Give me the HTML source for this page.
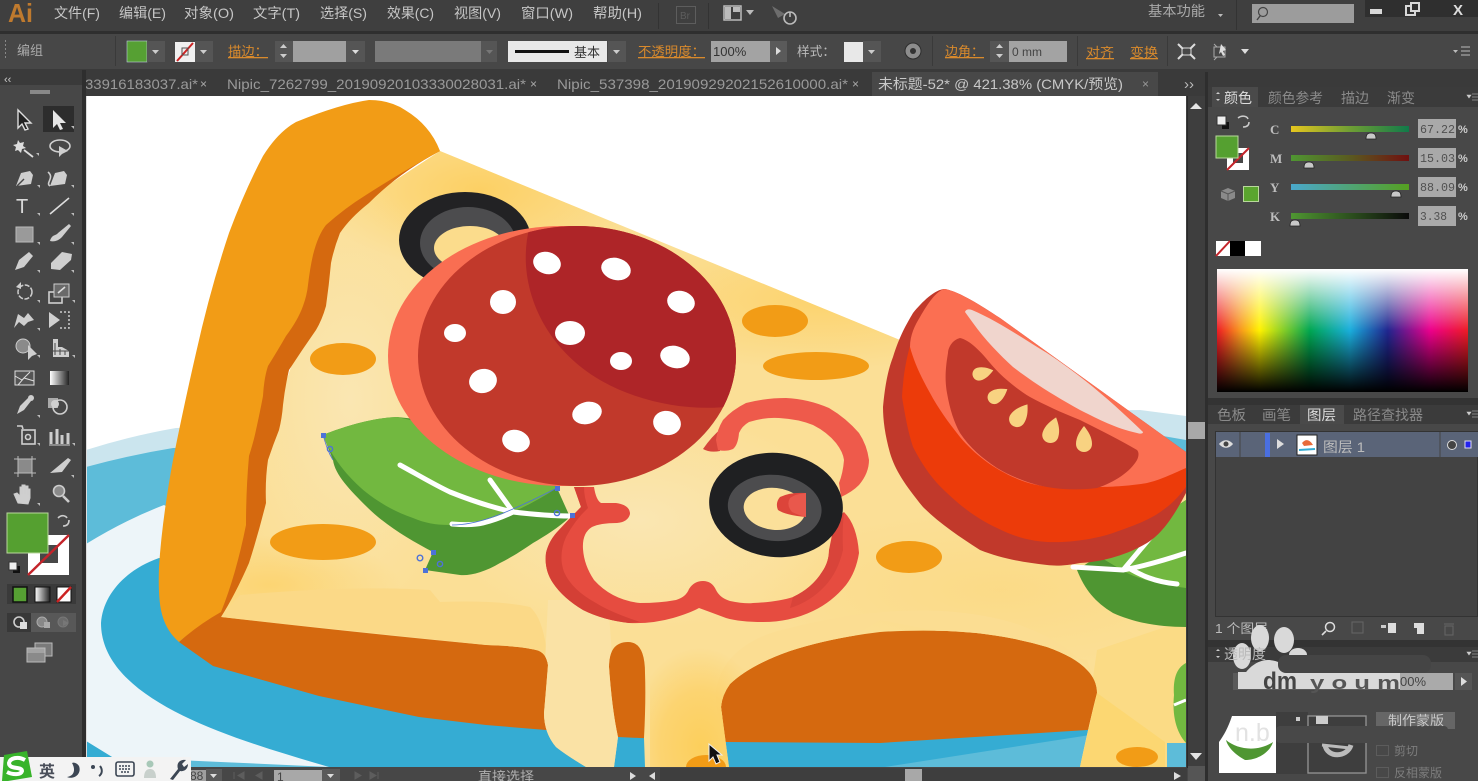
<!DOCTYPE html>
<html><head><meta charset="utf-8"><title>Illustrator</title>
<style>
html,body{margin:0;padding:0;background:#444;overflow:hidden;width:1478px;height:781px}
svg{display:block;overflow:hidden}
text{font-family:"Liberation Sans","Noto Sans CJK SC",sans-serif}
.m{font-size:14px;fill:#c6c6c6}
.o{font-size:13px;fill:#d98a2c;text-decoration:underline}
.t{font-size:14px;fill:#9a9a9a}
.p{font-size:14px;fill:#8a8a8a}
.k{font-family:"Liberation Serif",serif;font-weight:bold;font-size:13px;fill:#bdbdbd}
.f{font-family:"Liberation Mono",monospace;font-size:12px;fill:#505050}
.i{fill:#cfcfcf}.s{fill:none;stroke:#cfcfcf;stroke-width:1.6}
</style></head><body>
<svg width="1478" height="781" viewBox="0 0 1478 781" xmlns="http://www.w3.org/2000/svg">
<defs>
<linearGradient id="hue"><stop offset="0" stop-color="#ed1c24"/><stop offset=".09" stop-color="#f7941d"/><stop offset=".17" stop-color="#fff200"/><stop offset=".37" stop-color="#00a651"/><stop offset=".53" stop-color="#1aaedc"/><stop offset=".68" stop-color="#20268f"/><stop offset=".85" stop-color="#ec008c"/><stop offset="1" stop-color="#ed1c24"/></linearGradient>
<linearGradient id="wb" x1="0" y1="0" x2="0" y2="1"><stop offset="0" stop-color="#fff"/><stop offset=".5" stop-color="#fff" stop-opacity="0"/><stop offset=".5" stop-color="#000" stop-opacity="0"/><stop offset="1" stop-color="#000"/></linearGradient>
<linearGradient id="sc" ><stop offset="0" stop-color="#e6c61e"/><stop offset=".5" stop-color="#6f9e34"/><stop offset="1" stop-color="#117a4a"/></linearGradient>
<linearGradient id="sm"><stop offset="0" stop-color="#4f9632"/><stop offset=".5" stop-color="#5a5a20"/><stop offset="1" stop-color="#701010"/></linearGradient>
<linearGradient id="sy"><stop offset="0" stop-color="#4aa8cc"/><stop offset="1" stop-color="#55a020"/></linearGradient>
<linearGradient id="sk"><stop offset="0" stop-color="#4f9632"/><stop offset="1" stop-color="#0a0a0a"/></linearGradient>
<linearGradient id="gr"><stop offset="0" stop-color="#fff"/><stop offset="1" stop-color="#222"/></linearGradient>
<radialGradient id="ch1" cx=".5" cy=".5" r=".5"><stop offset="0" stop-color="#fae6b2"/><stop offset="1" stop-color="#fae6b2" stop-opacity="0"/></radialGradient>
<radialGradient id="ch2" cx=".5" cy=".5" r=".5"><stop offset="0" stop-color="#fcd064"/><stop offset="1" stop-color="#fcd064" stop-opacity="0"/></radialGradient>
<radialGradient id="ch3" cx=".5" cy=".85" r=".72"><stop offset="0" stop-color="#fccf5c"/><stop offset=".55" stop-color="#fcd064" stop-opacity=".75"/><stop offset="1" stop-color="#fcd064" stop-opacity="0"/></radialGradient>
<clipPath id="canvas"><rect x="86" y="96" width="1100" height="671"/></clipPath>
<clipPath id="pin"><ellipse cx="577" cy="356" rx="159" ry="130"/></clipPath>
<clipPath id="chz"><path d="M440 151L900 340 1186 460V743H1167V767H1080Q1090 720 1097 693 1097 680 1087 670 1075 657 1047 647 1000 633 947 631 910 630 880 632 830 638 790 651 750 665 730 684 722 695 721 707L729 767H645L644 738Q646 700 645 673 645 642 628 642 609 642 609 667 612 710 618 737L614 767H586Q566 755 556 747 544 733 544 713 546 690 548 665 546 652 536 650 520 646 486 645 350 632 221 617L250 520 280 400 320 280 350 210Z"/></clipPath>
<path id="seed" d="M0-13C4-8 8-2 8 5 8 10 4 13 0 13-4 13-8 10-8 5-8-2-4-8 0-13Z"/>
</defs>

<!-- base chrome -->
<rect width="1478" height="781" fill="#474747"/>
<rect width="1478" height="31" fill="#3f3f3f"/>
<rect y="31" width="1478" height="3" fill="#2f2f2f"/>
<rect y="34" width="1478" height="35" fill="#474747"/>
<rect y="69" width="1478" height="27" fill="#3a3a3a"/>

<!-- artwork -->
<g clip-path="url(#canvas)">
<rect x="86" y="96" width="1100" height="671" fill="#fff"/>
<!-- plate -->
<path d="M86 450Q130 436 176 428L500 420 1140 410 1186 416V767H86Z" fill="#cbe5ee"/>
<path d="M86 467Q130 455 173 448L1100 425 1186 440V767H86Z" fill="#5dbcd9"/>
<path d="M86 544Q125 520 164 505L400 640 1186 700V767H330L112 757 86 741Z" fill="#edf5f9"/>
<path d="M86 741L112 757H86Z" fill="#35acd3"/>
<path d="M101 623C103 595 125 570 159 558L400 600 1186 700V767H329C230 738 101 700 101 623Z" fill="#35acd3"/>
<path d="M885 767L1090 735V767Z" fill="#5dbcd9"/>
<rect x="1165" y="742" width="22" height="25" fill="#5dbcd9"/>
<!-- orange base -->
<path d="M179 642L221 605 1186 600V720L1087 730 880 743 726 742 618 737 546 730 486 725 419 717 319 696 213 666Z" fill="#d5690f"/>
<!-- cheese -->
<g clip-path="url(#chz)">
<rect x="200" y="140" width="990" height="630" fill="#fbdf96"/>
<ellipse cx="480" cy="190" rx="170" ry="80" fill="url(#ch2)"/>
<ellipse cx="350" cy="400" rx="120" ry="220" fill="url(#ch1)"/>
<ellipse cx="270" cy="585" rx="130" ry="50" fill="url(#ch2)" opacity=".7"/>
<ellipse cx="640" cy="520" rx="200" ry="110" fill="url(#ch1)"/>
<ellipse cx="820" cy="300" rx="220" ry="70" fill="url(#ch2)" opacity=".8"/>
<ellipse cx="1000" cy="590" rx="240" ry="80" fill="url(#ch2)" opacity=".3"/>
<path d="M221 617L240 595Q350 585 430 590L440 602Q500 600 530 607 545 620 548 665L536 650 486 645Z" fill="#fbd987"/>
<path d="M548 600H608L620 767H540Z" fill="#fae2a5"/>
<path d="M720 720C705 680 730 640 790 628 880 605 960 605 1020 625 1060 640 1090 660 1097 690L1087 660 880 620Z" fill="#fbdd92"/>
<rect x="650" y="630" width="100" height="137" fill="url(#ch3)"/>
<path d="M1097 650L1186 620V767H1080Z" fill="#fbdb85"/>
<path d="M1097 693L1165 742V767H1080Z" fill="#fcd772"/>
<ellipse cx="1137" cy="757" rx="21" ry="10" fill="#f29c16"/>
<ellipse cx="706" cy="767" rx="20" ry="12" fill="#f29c16"/>
</g>
<!-- dark crust band -->
<path d="M440 151Q400 172 369 203 350 218 340 233 334 248 331 263 329 285 326 306 322 320 316 330 302 350 289 370 285 387 283 405 282 418 279 430 273 445 268 460 265 480 266 503 258 535 249 563 235 595 221 617L180 640 200 400 300 150Z" fill="#d5690f"/>
<!-- crust -->
<path d="M440 151Q430 125 405 110 390 100 369 100 340 104 296 122 278 132 263 156 245 190 229 233 210 290 196 353 184 405 173 460 162 520 159 567 158 595 161 610 165 630 179 642 198 625 221 612 236 575 246 525 246 490 249 456 254 440 256 430 260 412 263 396 264 378 268 366 278 350 286 336 298 320 303 306 307 295 308 285 310 268 313 255 318 235 326 225 345 208 366 195 405 170 440 151Z" fill="#f29c16"/>
<!-- orange blobs -->
<g fill="#f29c16"><ellipse cx="343" cy="359" rx="33" ry="16"/><ellipse cx="775" cy="321" rx="33" ry="16"/><ellipse cx="816" cy="366" rx="53" ry="14"/><ellipse cx="323" cy="542" rx="53" ry="18"/><ellipse cx="909" cy="557" rx="33" ry="16"/></g>
<!-- olive 1 -->
<ellipse cx="465" cy="240" rx="66" ry="48" fill="#222224"/>
<ellipse cx="468" cy="243" rx="48" ry="36" fill="#4c4c4e"/>
<ellipse cx="470" cy="248" rx="36" ry="22" fill="#fbdc8c"/>
<!-- left leaf -->
<path d="M323 435C340 428 370 418 397 417L520 430 557 488 570 517C558 528 545 536 533 543 520 552 510 558 500 563 485 572 470 576 460 575L425 570 433 552C410 540 385 525 367 507 350 490 335 475 333 460Z" fill="#4f9632"/>
<path d="M323 435C340 428 370 418 397 417L500 440 557 488C538 500 520 510 500 517 485 523 468 525 450 525 435 525 425 523 413 518 395 512 380 503 367 493 348 478 330 455 323 435Z" fill="#72b840"/>
<path d="M400 465C420 476 435 485 450 492 470 500 490 507 513 512 530 514 550 516 570 516M452 524C465 525 475 525 483 523 495 520 505 516 513 512M490 480L513 512" fill="none" stroke="#fff" stroke-width="5" stroke-linecap="round"/>
<!-- pepper -->
<path d="M594 487Q596 500 601 503L616 503Q630 505 630 514 628 522 617 523 600 523 592 527 582 533 583 549 584 565 594 580 612 600 640 603 660 603 676 600 686 597 689 589 694 581 703 581 712 581 716 590 720 598 730 601 745 604 753 603 778 602 793 597 812 588 822 572 829 562 829 550L844 512Q857 525 859 553 856 572 846 585 832 602 813 611 790 622 763 622 740 622 726 618 710 612 699 608 690 613 673 618 652 624 629 623 603 620 583 610 563 598 553 583 544 570 546 553 549 540 559 530 570 518 581 507L574 487Z" fill="#e64c40"/>
<path d="M574 487L581 507Q570 518 559 530 549 540 546 553 544 570 553 583 563 598 583 610 603 620 629 623L640 622Q610 612 596 603 572 590 564 572 558 555 566 537 575 520 588 508 584 497 584 487Z" fill="#d43f35"/>
<path d="M844 512Q842 530 843 550 838 572 825 586 810 602 790 608L793 597Q812 588 822 572 829 562 829 550L835 520Z" fill="#d9443a"/>
<path d="M703 449Q712 436 722 428L720 451Q710 453 703 449Z" fill="#d5443a"/>
<path d="M841 497Q852 492 859 485 869 473 869 460 867 445 859 433 846 418 829 408 808 399 786 398 765 398 746 403 732 410 723 420 717 430 716 440L718 450Q726 452 733 449 738 445 739 433 742 426 749 422 765 417 779 418 798 419 813 425 827 432 836 443 843 452 844 460 843 473 839 483Z" fill="#ee5a4b"/>
<!-- pepperoni -->
<ellipse cx="562" cy="356" rx="174" ry="130" fill="#f96e52"/>
<ellipse cx="577" cy="356" rx="159" ry="130" fill="#c1392b"/>
<path d="M530 225C515 280 540 345 600 380 640 403 690 412 735 406L780 200Z" fill="#ae2528" clip-path="url(#pin)"/>
<g fill="#fff">
<ellipse cx="547" cy="263" rx="14" ry="11" transform="rotate(15 547 263)"/><ellipse cx="616" cy="269" rx="15" ry="11" transform="rotate(15 616 269)"/><ellipse cx="681" cy="302" rx="14" ry="11" transform="rotate(15 681 302)"/><ellipse cx="503" cy="302" rx="13" ry="12"/><ellipse cx="455" cy="333" rx="11" ry="9"/><ellipse cx="570" cy="333" rx="15" ry="12"/><ellipse cx="621" cy="361" rx="11" ry="9"/><ellipse cx="675" cy="357" rx="15" ry="11" transform="rotate(15 675 357)"/><ellipse cx="483" cy="381" rx="14" ry="12" transform="rotate(-15 483 381)"/><ellipse cx="587" cy="413" rx="15" ry="11" transform="rotate(-15 587 413)"/><ellipse cx="667" cy="423" rx="14" ry="12" transform="rotate(15 667 423)"/><ellipse cx="516" cy="441" rx="14" ry="11" transform="rotate(15 516 441)"/>
</g>
<!-- leaf notch anchors -->
<g fill="#4d72d8"><rect x="321" y="433" width="5" height="5"/><rect x="431" y="550" width="5" height="5"/><rect x="423" y="568" width="5" height="5"/><rect x="555" y="486" width="5" height="5"/><rect x="570" y="513" width="5" height="5"/></g>
<g fill="none" stroke="#4d72d8" stroke-width="1.4"><circle cx="330" cy="449" r="2.6"/><circle cx="420" cy="558" r="2.8"/><circle cx="440" cy="564" r="2.6"/><circle cx="557" cy="513" r="2.6"/></g>
<path d="M323 435C326 445 328 452 333 460M452 525C475 525 500 517 557 488" fill="none" stroke="#4d72d8" stroke-width=".8"/>
<!-- olive 2 -->
<g transform="rotate(6 776 505)"><ellipse cx="776" cy="505" rx="67" ry="52" fill="#1f2022"/><ellipse cx="775" cy="508" rx="47" ry="33" fill="#4c4c4e"/><ellipse cx="775" cy="509" rx="31" ry="21" fill="#fbe09a"/></g>
<path d="M806 493Q790 492 780 497 775 503 778 510 785 515 806 517Z" fill="#dc443a"/>
<path d="M806 493Q795 494 790 498 786 505 792 512 798 515 806 517Z" fill="#e9584c"/>
<!-- right leaf -->
<path d="M1077 570C1085 590 1095 602 1113 613 1135 623 1160 627 1186 627V500L1100 555Z" fill="#4f9632"/>
<path d="M1100 557L1186 500V588C1165 585 1140 580 1125 572Z" fill="#72b840"/>
<path d="M1073 567L1123 570C1145 566 1165 560 1186 553M1124 569L1155 532M1127 567C1140 575 1155 582 1177 584" fill="none" stroke="#fff" stroke-width="5" stroke-linecap="round"/>
<path d="M1186 663C1176 668 1173 680 1174 695 1172 715 1176 732 1186 743Z" fill="#72b840"/>
<path d="M1174 705L1186 700" stroke="#fff" stroke-width="3"/>
<!-- tomato -->
<path d="M945 289C960 292 980 305 1000 318L1186 452V493C1172 520 1160 535 1147 543 1125 556 1100 562 1080 563 1065 566 1055 566 1047 565 1020 562 1000 558 980 550 960 537 940 524 923 507 905 485 895 470 890 453 885 435 883 420 883 407 885 385 888 370 893 357 900 335 906 325 913 313 922 302 935 289 945 289Z" fill="#c1392b"/>
<path d="M902 397C905 415 908 432 913 447 925 470 935 482 947 493 965 510 980 520 997 528 1015 537 1030 541 1047 542 1070 543 1095 539 1113 533 1135 525 1150 520 1163 510 1172 504 1180 495 1186 487V452L945 289C925 300 905 340 902 397Z" fill="#ec3b0a"/>
<path d="M945 289C960 292 980 305 1000 318L1186 452V468C1170 475 1160 480 1147 483 1130 486 1110 487 1097 487 1070 490 1040 488 1020 480 995 470 975 455 960 437 948 422 938 408 930 393 921 377 914 362 910 347 910 335 915 325 920 317 928 303 937 290 945 289Z" fill="#fb6f52"/>
<path d="M960 338C952 340 948 348 948 353 945 370 945 382 947 393 950 410 954 422 960 433 970 448 982 458 997 468 1012 477 1030 484 1047 487 1065 490 1082 490 1097 488 1115 482 1130 472 1137 460 1139 456 1139 452 1137 450 1120 440 1100 430 1080 420 1060 412 1045 405 1030 397 1015 388 1000 375 990 363 982 353 970 340 960 338Z" fill="#c1392b"/>
<path d="M965 312C966 309 969 309 972 310 1000 322 1025 340 1047 353 1085 378 1115 405 1143 432 1143 434 1140 434 1137 433 1115 428 1100 420 1080 410 1055 396 1035 384 1013 367 1000 355 985 340 973 323Z" fill="#f0d5cd"/>
<g fill="#f8d281">
<use href="#seed" transform="translate(983 373) rotate(75) scale(.82)"/>
<use href="#seed" transform="translate(998 395) rotate(58) scale(.85)"/>
<use href="#seed" transform="translate(1020 415) rotate(35)"/>
<use href="#seed" transform="translate(1052 430) rotate(18) scale(1.02)"/>
<use href="#seed" transform="translate(1084 439)"/>
</g>
<!-- cursor -->
<path d="M709 744V761L713 757 716 764 720 762 717 755H722Z" fill="#111" stroke="#eee" stroke-width="1"/>
</g>
<rect x="86" y="96" width="1" height="671" fill="#ddd"/>

<!-- menu bar -->
<text x="8" y="22" font-size="26" font-weight="bold" fill="#bf7a2e" textLength="25" lengthAdjust="spacingAndGlyphs">Ai</text>
<text class="m" x="54" y="18" textLength="46" lengthAdjust="spacingAndGlyphs">文件(F)</text>
<text class="m" x="119" y="18" textLength="47" lengthAdjust="spacingAndGlyphs">编辑(E)</text>
<text class="m" x="184" y="18" textLength="50" lengthAdjust="spacingAndGlyphs">对象(O)</text>
<text class="m" x="253" y="18" textLength="47" lengthAdjust="spacingAndGlyphs">文字(T)</text>
<text class="m" x="320" y="18" textLength="47" lengthAdjust="spacingAndGlyphs">选择(S)</text>
<text class="m" x="387" y="18" textLength="47" lengthAdjust="spacingAndGlyphs">效果(C)</text>
<text class="m" x="454" y="18" textLength="47" lengthAdjust="spacingAndGlyphs">视图(V)</text>
<text class="m" x="521" y="18" textLength="52" lengthAdjust="spacingAndGlyphs">窗口(W)</text>
<text class="m" x="593" y="18" textLength="49" lengthAdjust="spacingAndGlyphs">帮助(H)</text>
<rect x="658" y="3" width="1" height="26" fill="#333"/>
<rect x="676.500" y="6.500" width="19" height="17" fill="none" stroke="#5d5d5d"/><text x="680" y="19" font-size="10" fill="#5d5d5d">Br</text>
<rect x="708" y="3" width="1" height="26" fill="#333"/>
<rect x="724" y="6" width="17" height="14" fill="none" stroke="#bbb" stroke-width="1.5"/><rect x="725" y="7" width="6" height="12" fill="#bbb"/><rect x="733" y="7" width="7" height="5" fill="#bbb"/>
<path d="M746 10h8l-4 5z" fill="#bbb"/>
<path d="M772 6L785 14 778 18Z" fill="#6d6d6d"/><circle cx="790" cy="18" r="6" fill="none" stroke="#bbb" stroke-width="1.6"/><path d="M790 12v5" stroke="#bbb" stroke-width="1.6"/>
<text class="m" x="1148" y="16" textLength="57" lengthAdjust="spacingAndGlyphs" style="fill:#aaa">基本功能</text>
<path d="M1218 14h5l-2.500 3z" fill="#bbb"/>
<rect x="1236" y="0" width="1" height="30" fill="#333"/>
<rect x="1252" y="4" width="102" height="19" fill="#9c9c9c"/>
<circle cx="1263" cy="12" r="4.500" fill="none" stroke="#444" stroke-width="1.2"/><path d="M1260 16l-3 4" stroke="#444" stroke-width="1.4"/>
<rect x="1365" y="0" width="113" height="17" fill="#2f2f2f"/>
<rect x="1370" y="9" width="12" height="5" fill="#d8d8d8"/>
<rect x="1406" y="6" width="9" height="9" fill="none" stroke="#d8d8d8" stroke-width="2"/><rect x="1411" y="3" width="8" height="8" fill="#2f2f2f" stroke="#d8d8d8" stroke-width="2"/>
<text x="1453" y="15" font-size="15" fill="#ddd" font-weight="bold">X</text>

<!-- control bar -->
<g fill="#888"><rect x="5" y="40" width="1" height="2"/><rect x="5" y="44" width="1" height="2"/><rect x="5" y="48" width="1" height="2"/><rect x="5" y="52" width="1" height="2"/><rect x="5" y="56" width="1" height="2"/></g>
<text class="m" x="17" y="55" font-size="13" style="font-size:13px;fill:#aaa">编组</text>
<rect x="115" y="36" width="1" height="30" fill="#3a3a3a"/>
<rect x="127" y="41" width="20" height="21" fill="#56a033" stroke="#bcd" stroke-width=".6"/>
<rect x="147" y="41" width="18" height="21" fill="#555"/><path d="M152 50h7l-3.500 4z" fill="#ccc"/>
<rect x="175" y="42" width="20" height="20" fill="#f0f0f0"/><path d="M177 61L193 43" stroke="#c22" stroke-width="2"/><rect x="182" y="48" width="6" height="7" fill="none" stroke="#555"/>
<rect x="195" y="41" width="18" height="21" fill="#555"/><path d="M200 50h7l-3.500 4z" fill="#ccc"/>
<text class="o" x="228" y="56" textLength="40" lengthAdjust="spacingAndGlyphs">描边：</text>
<rect x="275" y="41" width="18" height="21" fill="#555"/><path d="M280 48h7l-3.500-4zM280 54h7l-3.500 4z" fill="#ccc"/>
<rect x="293" y="41" width="53" height="21" fill="#a0a0a0"/>
<rect x="346" y="41" width="19" height="21" fill="#555"/><path d="M352 50h7l-3.500 4z" fill="#ddd"/>
<rect x="375" y="41" width="106" height="21" fill="#7a7a7a"/><rect x="481" y="41" width="16" height="21" fill="#555"/><path d="M486 50h7l-3.500 4z" fill="#777"/>
<rect x="508" y="41" width="99" height="21" fill="#e8e8e8"/><rect x="515" y="50" width="54" height="3" fill="#111"/>
<text x="574" y="57" font-size="13" fill="#333">基本</text>
<rect x="608" y="41" width="18" height="21" fill="#555"/><path d="M613 50h7l-3.500 4z" fill="#ccc"/>
<text class="o" x="638" y="56" textLength="67" lengthAdjust="spacingAndGlyphs">不透明度：</text>
<rect x="711" y="41" width="59" height="21" fill="#a3a3a3"/><text x="713" y="56" font-size="13" fill="#333" font-family="Liberation Mono">100%</text>
<rect x="770" y="41" width="17" height="21" fill="#5a5a5a"/><path d="M776 47v8l5-4z" fill="#ddd"/>
<text class="m" x="797" y="56" style="font-size:13px;fill:#bbb" textLength="38" lengthAdjust="spacingAndGlyphs">样式：</text>
<rect x="844" y="42" width="19" height="20" fill="#e8e8e8"/>
<rect x="863" y="41" width="18" height="21" fill="#555"/><path d="M868 50h7l-3.500 4z" fill="#ccc"/>
<circle cx="913" cy="51" r="8" fill="#8d8d8d" stroke="#2e2e2e"/><circle cx="913" cy="51" r="3" fill="#333"/>
<rect x="932" y="36" width="1" height="30" fill="#3a3a3a"/>
<text class="o" x="945" y="56" textLength="39" lengthAdjust="spacingAndGlyphs">边角：</text>
<rect x="990" y="41" width="19" height="21" fill="#555"/><path d="M996 48h7l-3.500-4zM996 54h7l-3.500 4z" fill="#ccc"/>
<rect x="1009" y="41" width="58" height="21" fill="#a3a3a3"/><text x="1012" y="56" font-size="12" fill="#444" font-family="Liberation Mono">0 mm</text>
<rect x="1077" y="36" width="1" height="30" fill="#3a3a3a"/>
<text class="o" x="1086" y="57" textLength="28" lengthAdjust="spacingAndGlyphs">对齐</text>
<text class="o" x="1130" y="57" textLength="28" lengthAdjust="spacingAndGlyphs">变换</text>
<rect x="1167" y="36" width="1" height="30" fill="#3a3a3a"/>
<path d="M1178 44l5 5M1195 44l-5 5M1178 59l5-5M1195 59l-5-5" stroke="#ddd" stroke-width="2"/><rect x="1182" y="48" width="9" height="7" fill="none" stroke="#ddd"/>
<rect x="1214" y="47" width="11" height="10" fill="none" stroke="#aaa"/><path d="M1221 44l5 6-3 1 2 4-2 1-2-4-2 2Z" fill="#ddd"/><path d="M1214 44l3 3M1214 60l3-3" stroke="#aaa"/>
<path d="M1241 49h8l-4 5z" fill="#ddd"/>
<path d="M1461 47h9M1461 51h9M1461 55h9" stroke="#bbb"/><path d="M1453 50h5l-2.500 3z" fill="#bbb"/>

<!-- tabs -->
<rect x="0" y="70" width="82" height="15" fill="#3a3a3a"/>
<text x="4" y="83" font-size="11" fill="#ccc">‹‹</text>
<rect x="872" y="72" width="286" height="24" fill="#484848"/>
<text class="t" x="85" y="89" textLength="113" lengthAdjust="spacingAndGlyphs">33916183037.ai*</text><text x="200" y="88" font-size="12" fill="#aaa">×</text>
<text class="t" x="227" y="89" textLength="299" lengthAdjust="spacingAndGlyphs">Nipic_7262799_20190920103330028031.ai*</text><text x="530" y="88" font-size="12" fill="#aaa">×</text>
<text class="t" x="557" y="89" textLength="291" lengthAdjust="spacingAndGlyphs">Nipic_537398_20190929202152610000.ai*</text><text x="852" y="88" font-size="12" fill="#aaa">×</text>
<text class="t" x="878" y="89" textLength="245" lengthAdjust="spacingAndGlyphs" style="fill:#c8c8c8">未标题-52* @ 421.38% (CMYK/预览)</text><text x="1142" y="88" font-size="12" fill="#999">×</text>
<text x="1184" y="89" font-size="15" fill="#bbb">››</text>

<!-- left toolbar -->
<rect x="0" y="85" width="82" height="683" fill="#474747"/>
<rect x="82" y="70" width="4" height="698" fill="#2e2e2e"/>
<rect x="30" y="90" width="20" height="4" fill="#888"/>
<rect x="43" y="106" width="31" height="26" fill="#2d2d2d"/>
<g>
<!-- row1 -->
<path d="M18 110V128L22 124 25 130 28 129 25 123 31 123Z" fill="#222" stroke="#ddd" stroke-width="1.4"/>
<path d="M53 110V128L57 124 60 130 63 129 60 123 66 123Z" fill="#e6e6e6"/>
<!-- wand -->
<path d="M18 140l2 3 4-1-1 4 3 2-4 1-1 4-3-3-3 1 1-4-3-2 4-1Z" fill="#ddd"/><path d="M24 150L33 157" stroke="#ddd" stroke-width="1.8"/>
<ellipse cx="60" cy="146" rx="10" ry="6" class="s"/><path d="M59 146V157L62 154 68 151Z" class="i"/>
<!-- pen -->
<path d="M16 186L21 173 30 171 33 175 31 184Z" class="i"/><path d="M17 186L24 179" stroke="#474747" stroke-width="1.4"/>
<path d="M50 186L55 173 64 171 67 175 65 184 Z" class="i"/><path d="M48 172C55 178 45 183 50 186" class="s"/>
<!-- T line -->
<text x="16" y="213" font-family="Liberation Serif" font-size="20" fill="#d8d8d8">T</text>
<path d="M50 214L69 198" stroke="#ddd" stroke-width="1.6"/>
<!-- rect brush -->
<rect x="16" y="227" width="17" height="15" fill="#9a9a9a" stroke="#bbb"/>
<path d="M50 241C52 234 56 236 58 233L69 224 71 226 62 237C58 241 54 242 50 241Z" class="i"/>
<!-- pencil eraser -->
<path d="M15 270L19 260 29 252 33 256 24 267Z" class="i"/>
<path d="M51 263L62 252 72 254 71 260 60 270 51 269Z" class="i"/>
<!-- rotate scale -->
<circle cx="25" cy="292" r="7" fill="none" stroke="#ccc" stroke-width="1.5" stroke-dasharray="5 1.500"/><path d="M16 287l5-5v7z" class="i"/>
<rect x="49" y="292" width="13" height="11" class="s"/><rect x="54" y="284" width="15" height="13" fill="#6a6a6a" stroke="#ccc"/><path d="M58 293l7-6" stroke="#ddd" stroke-width="1.6"/>
<!-- warp free transform -->
<path d="M14 328L18 314 24 318 28 313 34 320 28 322 24 326 19 322Z" class="i"/>
<path d="M49 312V328L60 320Z" class="i"/><path d="M60 312H69V328H60" fill="none" stroke="#ccc" stroke-dasharray="2 2" stroke-width="1.5"/>
<!-- shape builder / perspective -->
<circle cx="23" cy="346" r="7" fill="#8a8a8a" stroke="#ccc"/><path d="M28 345V360L32 356 37 354Z" class="i"/>
<path d="M49 339H53V357H69V351L62 347H58V339Z" class="i"/><path d="M55 343V355M60 349V355M65 351V355M53 351H69" stroke="#474747"/>
<!-- mesh gradient -->
<rect x="15" y="371" width="19" height="14" fill="#555" stroke="#ddd"/><path d="M15 376L22 380 30 372M18 385L24 378 34 381" stroke="#ddd" fill="none"/>
<rect x="50" y="371" width="19" height="14" fill="url(#gr)"/>
<!-- eyedropper blend -->
<path d="M17 414L20 406 28 398 31 401 24 410Z" class="i"/><circle cx="31" cy="398" r="3" class="i"/>
<rect x="48" y="398" width="10" height="10" fill="#aaa"/><circle cx="60" cy="407" r="7" class="s"/><circle cx="55" cy="404" r="4" class="i"/>
<!-- symbol / chart -->
<rect x="22" y="430" width="13" height="14" class="s"/><circle cx="28" cy="437" r="2.500" class="s"/><path d="M17 426h5l1 3" class="s"/>
<path d="M51 444V432M57 444V429M62 444V435M68 444V433" stroke="#ccc" stroke-width="3"/><path d="M49 445H70" stroke="#ccc"/>
<!-- artboard / slice -->
<rect x="18" y="459" width="14" height="14" fill="#8a8a8a"/><path d="M14 459H36M14 473H36M18 456V477M32 456V477" stroke="#bbb"/>
<path d="M50 473L68 458 71 460 62 472Z" class="i"/>
<!-- hand zoom -->
<path d="M18 503L14 494 17 493 20 496V487H22V494 485H25V494 486H28V495 489H30V498L28 504Z" class="i" stroke="#ccc"/>
<circle cx="59" cy="491" r="5.500" fill="#8a8a8a" stroke="#ccc" stroke-width="1.6"/><path d="M63 496L69 502" stroke="#ccc" stroke-width="2.6"/>
</g>
<!-- tiny corner triangles -->
<g fill="#bbb">
<path d="M74 129v-3h-3z"/><path d="M39 156v-3h-3z"/><path d="M40 188v-3h-3z"/><path d="M74 188v-3h-3z"/><path d="M40 216v-3h-3z"/><path d="M74 216v-3h-3z"/><path d="M40 245v-3h-3z"/><path d="M74 245v-3h-3z"/><path d="M40 273v-3h-3z"/><path d="M74 273v-3h-3z"/><path d="M40 303v-3h-3z"/><path d="M75 303v-3h-3z"/><path d="M40 331v-3h-3z"/><path d="M40 358v-3h-3z"/><path d="M75 358v-3h-3z"/><path d="M40 418v-3h-3z"/><path d="M40 446v-3h-3z"/><path d="M75 446v-3h-3z"/><path d="M74 478v-3h-3z"/><path d="M40 506v-3h-3z"/>
</g>
<!-- fill/stroke -->
<rect x="28" y="535" width="41" height="40" fill="#fff"/><rect x="40" y="545" width="18" height="18" fill="#474747"/>
<path d="M28 575L69 535" stroke="#c4242a" stroke-width="2.4"/>
<rect x="7" y="513" width="41" height="40" fill="#55a030" stroke="#b9d79c"/>
<path d="M58 518C62 514 66 516 67 518M69 520C69 525 66 526 63 526" fill="none" stroke="#ccc" stroke-width="1.6"/>
<rect x="13" y="566" width="7" height="7" fill="#111"/><rect x="9" y="562" width="8" height="8" fill="#eee" stroke="#333"/>
<rect x="7" y="584" width="69" height="20" fill="#3a3a3a"/>
<rect x="13" y="587" width="14" height="15" fill="#56a033" stroke="#111" stroke-width="1.5"/>
<rect x="35" y="587" width="15" height="15" fill="url(#gr)" stroke="#111" stroke-width="1"/>
<rect x="57" y="587" width="14" height="15" fill="#fff" stroke="#111"/><path d="M57 602L71 587" stroke="#c22" stroke-width="2.4"/>
<rect x="7" y="613" width="24" height="19" fill="#383838"/><rect x="31" y="613" width="45" height="19" fill="#585858"/>
<circle cx="19" cy="622" r="5" class="s"/><rect x="20" y="622" width="7" height="7" fill="#ddd"/>
<circle cx="42" cy="622" r="5" fill="#888" stroke="#aaa"/><rect x="44" y="622" width="6" height="6" fill="#aaa"/>
<circle cx="63" cy="622" r="5" fill="#6b6b6b" stroke="#777"/><path d="M63 620l6 3-6 3z" fill="#777"/>
<rect x="35" y="643" width="17" height="13" fill="#7a7a7a" stroke="#bbb"/><rect x="27" y="648" width="18" height="14" fill="#8a8a8a" stroke="#bbb"/><rect x="27" y="648" width="18" height="5" fill="#bbb" opacity=".5"/>

<!-- vertical scrollbar -->
<rect x="1186" y="96" width="22" height="672" fill="#3e3e3e"/>
<rect x="1187" y="96" width="1" height="672" fill="#2a2a2a"/><rect x="1205" y="72" width="3" height="709" fill="#2e2e2e"/>
<path d="M1196 103l-6 6h12z" fill="#e5e5e5"/>
<rect x="1188" y="422" width="17" height="17" fill="#a8a8a8"/>
<path d="M1190 753h12l-6 7z" fill="#e5e5e5"/>
<rect x="1188" y="766" width="17" height="15" fill="#555"/>

<!-- right panels -->
<rect x="1208" y="72" width="270" height="15" fill="#3a3a3a"/>
<rect x="1208" y="87" width="270" height="20" fill="#3b3b3b"/>
<rect x="1212" y="87" width="46" height="20" fill="#4a4a4a"/>
<rect x="1208" y="107" width="270" height="291" fill="#484848"/>
<path d="M1216 94l2-2 2 2zM1216 99l2 2 2-2z" fill="#ccc"/>
<text x="1224" y="103" font-size="14" fill="#ddd">颜色</text>
<text class="p" x="1268" y="103" textLength="55" lengthAdjust="spacingAndGlyphs">颜色参考</text>
<text class="p" x="1341" y="103" textLength="28" lengthAdjust="spacingAndGlyphs">描边</text>
<text class="p" x="1387" y="103" textLength="28" lengthAdjust="spacingAndGlyphs">渐变</text>
<path d="M1467 95h4l-2 3zM1472 94h6M1472 97h6M1472 100h6" fill="#ccc" stroke="#ccc" stroke-width=".6"/>
<rect x="1222" y="122" width="7" height="7" fill="#111"/><rect x="1217" y="116" width="9" height="9" fill="#eee" stroke="#333"/>
<path d="M1238 118C1242 115 1247 116 1248 119M1249 122C1249 126 1246 127 1243 127" fill="none" stroke="#ccc" stroke-width="1.5"/>
<rect x="1227" y="148" width="22" height="22" fill="#fff"/><rect x="1233" y="153" width="10" height="10" fill="#474747"/>
<path d="M1227 170L1249 148" stroke="#c4242a" stroke-width="2"/>
<rect x="1216" y="136" width="22" height="22" fill="#55a030" stroke="#b9d79c"/>
<path d="M1228 188l7 3v7l-7 3-7-3v-7z" fill="#8a8a8a"/><path d="M1221 191l7 3 7-3M1228 194v7" stroke="#555" fill="none"/>
<rect x="1243.500" y="186.500" width="15" height="15" fill="#5aa52e" stroke="#b9d79c"/>
<text class="k" x="1270" y="134">C</text><text class="k" x="1270" y="163">M</text><text class="k" x="1270" y="192">Y</text><text class="k" x="1270" y="221">K</text>
<rect x="1291" y="126" width="118" height="6" fill="url(#sc)"/>
<rect x="1291" y="155" width="118" height="6" fill="url(#sm)"/>
<rect x="1291" y="184" width="118" height="6" fill="url(#sy)"/>
<rect x="1291" y="213" width="118" height="6" fill="url(#sk)"/>
<g fill="#c8c8c8" stroke="#222" stroke-width=".8"><path d="M1366 139c0-5 2-6 5-6s5 1 5 6z"/><path d="M1304 168c0-5 2-6 5-6s5 1 5 6z"/><path d="M1391 197c0-5 2-6 5-6s5 1 5 6z"/><path d="M1290 226c0-5 2-6 5-6s5 1 5 6z"/></g>
<g fill="#a9a9a9"><rect x="1418" y="119" width="38" height="19"/><rect x="1418" y="148" width="38" height="20"/><rect x="1418" y="177" width="38" height="20"/><rect x="1418" y="206" width="38" height="20"/></g>
<text class="f" x="1420" y="133" textLength="35" lengthAdjust="spacingAndGlyphs">67.22</text>
<text class="f" x="1420" y="162" textLength="35" lengthAdjust="spacingAndGlyphs">15.03</text>
<text class="f" x="1420" y="191" textLength="35" lengthAdjust="spacingAndGlyphs">88.09</text>
<text class="f" x="1420" y="220" textLength="27" lengthAdjust="spacingAndGlyphs">3.38</text>
<g font-size="11" fill="#ccc" font-weight="bold"><text x="1458" y="133">%</text><text x="1458" y="162">%</text><text x="1458" y="191">%</text><text x="1458" y="220">%</text></g>
<rect x="1216" y="241" width="14" height="15" fill="#fff"/><path d="M1216 256L1230 241" stroke="#c4242a" stroke-width="2"/>
<rect x="1230" y="241" width="15" height="15" fill="#000"/><rect x="1245" y="241" width="16" height="15" fill="#fff"/>
<rect x="1217" y="269" width="251" height="123" fill="url(#hue)"/><rect x="1217" y="269" width="251" height="123" fill="url(#wb)"/>

<rect x="1208" y="398" width="270" height="7" fill="#333"/>
<rect x="1208" y="405" width="270" height="19" fill="#3b3b3b"/><rect x="1300" y="405" width="44" height="19" fill="#4a4a4a"/>
<text class="p" x="1217" y="420" textLength="29" lengthAdjust="spacingAndGlyphs">色板</text>
<text class="p" x="1262" y="420" textLength="29" lengthAdjust="spacingAndGlyphs">画笔</text>
<text x="1307" y="420" font-size="14" fill="#ddd" textLength="29" lengthAdjust="spacingAndGlyphs">图层</text>
<text class="p" x="1353" y="420" textLength="70" lengthAdjust="spacingAndGlyphs">路径查找器</text>
<path d="M1467 412h4l-2 3zM1472 411h6M1472 414h6M1472 417h6" fill="#ccc" stroke="#ccc" stroke-width=".6"/>
<rect x="1208" y="424" width="270" height="216" fill="#484848"/>
<rect x="1215.500" y="431.500" width="262" height="185" fill="#434343" stroke="#333"/>
<rect x="1216" y="432" width="262" height="25" fill="#5a6478"/>
<path d="M1240 432v25M1440 432v25" stroke="#444"/>
<path d="M1219 444C1223 439 1229 439 1233 444 1229 449 1223 449 1219 444Z" fill="#ddd"/><circle cx="1226" cy="444" r="2.500" fill="#444"/>
<rect x="1265" y="433" width="5" height="24" fill="#4a6fe0"/>
<path d="M1277 439v10l7-5z" fill="#ddd"/>
<rect x="1297" y="435" width="20" height="20" fill="#fff" stroke="#222"/><path d="M1302 443C1306 438 1310 440 1313 445L1304 446Z" fill="#e86b3a"/><path d="M1299 450L1315 449" stroke="#35acd3" stroke-width="2"/>
<text x="1323" y="452" font-size="14" fill="#bcbcbc" textLength="42" lengthAdjust="spacingAndGlyphs">图层 1</text>
<circle cx="1452" cy="445" r="4.500" fill="#444" stroke="#ddd"/><rect x="1465" y="441" width="6" height="7" fill="#22e" stroke="#dde"/>
<text x="1215" y="633" font-size="13" fill="#bbb" textLength="53" lengthAdjust="spacingAndGlyphs">1 个图层</text>
<circle cx="1330" cy="627" r="4.500" fill="none" stroke="#ddd" stroke-width="1.5"/><path d="M1326 631l-4 4" stroke="#ddd" stroke-width="1.6"/>
<rect x="1352" y="622" width="11" height="11" fill="none" stroke="#666"/><rect x="1381" y="625" width="5" height="3" fill="#ccc"/><rect x="1388" y="623" width="8" height="10" fill="#ddd"/><path d="M1414 623h10v11h-7v-6h-3z" fill="#ddd"/><path d="M1444 624h10M1445 626h8v9h-8z" fill="none" stroke="#666"/>

<rect x="1208" y="640" width="270" height="141" fill="#484848"/>
<rect x="1208" y="640" width="270" height="7" fill="#333"/>
<rect x="1208" y="647" width="270" height="15" fill="#3b3b3b"/>
<rect x="1233" y="673" width="220" height="17" fill="#5a5a5a"/>
<rect x="1400" y="673" width="53" height="17" fill="#aaa"/><text x="1400" y="686" font-size="13" fill="#444" textLength="26" lengthAdjust="spacingAndGlyphs">00%</text>
<rect x="1455" y="673" width="17" height="17" fill="#555"/><path d="M1461 677v9l6-4.500z" fill="#ddd"/>
<path d="M1467 652h4l-2 3zM1472 651h6M1472 654h6M1472 657h6" fill="#ccc" stroke="#ccc" stroke-width=".6"/>
<path d="M1216 651l2-2 2 2zM1216 656l2 2 2-2z" fill="#ccc"/>
<rect x="1219" y="716" width="57" height="57" fill="#fff"/>
<path d="M1219 716H1232C1228 728 1224 735 1219 742Z" fill="#484848"/>
<path d="M1226 740C1238 750 1258 752 1273 742 1270 752 1258 760 1245 760 1236 755 1228 748 1226 740Z" fill="#4f9632"/>
<rect x="1276" y="712" width="32" height="62" fill="#3e3e3e"/>
<rect x="1308" y="716" width="58" height="57" fill="#3e3e3e" stroke="#8f8f8f" stroke-width="1.4"/>
<rect x="1316" y="716" width="12" height="8" fill="#ccc"/><rect x="1296" y="717" width="4" height="4" fill="#ccc"/>
<rect x="1376" y="712" width="79" height="17" fill="#666"/>
<rect x="1276" y="726" width="172" height="17" rx="4" fill="#484848"/>
<text x="1388" y="725" font-size="13" fill="#c8c8c8" textLength="56" lengthAdjust="spacingAndGlyphs">制作蒙版</text>
<rect x="1376.500" y="745.500" width="12" height="10" fill="none" stroke="#5c5c5c"/><text x="1394" y="755" font-size="12" fill="#7d7d7d">剪切</text>
<rect x="1376.500" y="767.500" width="12" height="10" fill="none" stroke="#5c5c5c"/><text x="1394" y="777" font-size="12" fill="#7d7d7d">反相蒙版</text>

<!-- watermark -->
<g fill="#d9d9d9">
<ellipse cx="1260" cy="638" rx="9" ry="13"/><ellipse cx="1284" cy="640" rx="10" ry="13"/><ellipse cx="1242" cy="656" rx="9" ry="13"/><ellipse cx="1298" cy="655" rx="9" ry="7"/>
<path d="M1238 689C1242 672 1255 660 1268 660 1284 660 1300 675 1304 689Z"/>
<rect x="1238" y="672" width="162" height="17"/>
</g>
<rect x="1278" y="655" width="153" height="18" rx="8" fill="#454545"/>
<text x="1263" y="689" font-size="24" font-weight="bold" fill="#454545" textLength="34" lengthAdjust="spacingAndGlyphs">dm</text>
<text x="1310" y="689" font-size="18" font-weight="bold" fill="#555" textLength="90" lengthAdjust="spacingAndGlyphs">y o u m</text>
<text x="1235" y="741" font-size="25" fill="#e2e2e2">n.b</text>
<text x="1224" y="659" font-size="14" fill="#bbb" textLength="42" lengthAdjust="spacingAndGlyphs">透明度</text>
<path d="M1325 745C1327 758 1347 758 1351 745" fill="none" stroke="#bbb" stroke-width="5"/><path d="M1322 745L1350 748" stroke="#bbb" stroke-width="3"/>

<!-- status bar -->
<rect x="0" y="767" width="1186" height="14" fill="#474747"/>
<rect x="190" y="770" width="16" height="11" fill="#a0a0a0"/><text x="190" y="780" font-size="12" fill="#444">88</text>
<rect x="206" y="769" width="16" height="12" fill="#5a5a5a"/><path d="M210 774h7l-3.500 4z" fill="#ddd"/>
<path d="M234 772v7M244 772l-6 3.500 6 3.500zM262 772l-6 3.500 6 3.500z" fill="#5d5d5d" stroke="#5d5d5d"/>
<rect x="274" y="770" width="48" height="11" fill="#a8a8a8"/><text x="277" y="781" font-size="12" fill="#444">1</text>
<rect x="322" y="769" width="18" height="12" fill="#5a5a5a"/><path d="M327 774h7l-3.500 4z" fill="#ddd"/>
<path d="M355 772l6 3.500-6 3.500zM370 772l6 3.500-6 3.500zM378 772v7" fill="#5d5d5d" stroke="#5d5d5d"/>
<text x="478" y="781" font-size="13" fill="#b0b0b0" textLength="56" lengthAdjust="spacingAndGlyphs">直接选择</text>
<path d="M630 772l6 4-6 4zM655 772l-6 4 6 4z" fill="#ddd"/>
<rect x="660" y="768" width="527" height="13" fill="#3e3e3e"/>
<rect x="905" y="769" width="17" height="12" fill="#a8a8a8"/>
<path d="M1174 772l7 4-7 4z" fill="#ddd"/>

<!-- IME bar -->
<rect x="0" y="757" width="191" height="24" fill="#f3f3f3"/>
<path d="M4 755L27 751 32 777 8 781 2 781Z" fill="#38b32a"/>
<path d="M25 760C18 756 10 758 9 763 9 770 22 766 22 771 21 775 13 775 7 772" fill="none" stroke="#fff" stroke-width="4"/>
<text x="39" y="777" font-size="16" font-weight="bold" fill="#4a4f5a">英</text>
<path d="M72 763C76 770 74 776 67 777 74 780 82 774 79 766 77 763 74 762 72 763Z" fill="#3c4654"/>
<circle cx="93" cy="767" r="2" fill="#3c4654"/><path d="M100 766C103 770 102 774 99 776" fill="none" stroke="#3c4654" stroke-width="2"/>
<rect x="116" y="762" width="18" height="14" rx="2" fill="none" stroke="#3c4654" stroke-width="1.6"/><path d="M119 766h12M119 769h12M121 772h8" stroke="#3c4654" stroke-width="1.4" stroke-dasharray="2 1"/>
<circle cx="150" cy="764" r="3.500" fill="#a8c8b8"/><path d="M144 778C144 771 147 769 150 769 153 769 156 771 156 778Z" fill="#c8d0cc"/>
<path d="M170 779L178 769C176 763 180 759 186 760L182 764 184 767 188 764C188 769 184 772 180 771L173 780Z" fill="#3c4654"/>
</svg>
</body></html>
